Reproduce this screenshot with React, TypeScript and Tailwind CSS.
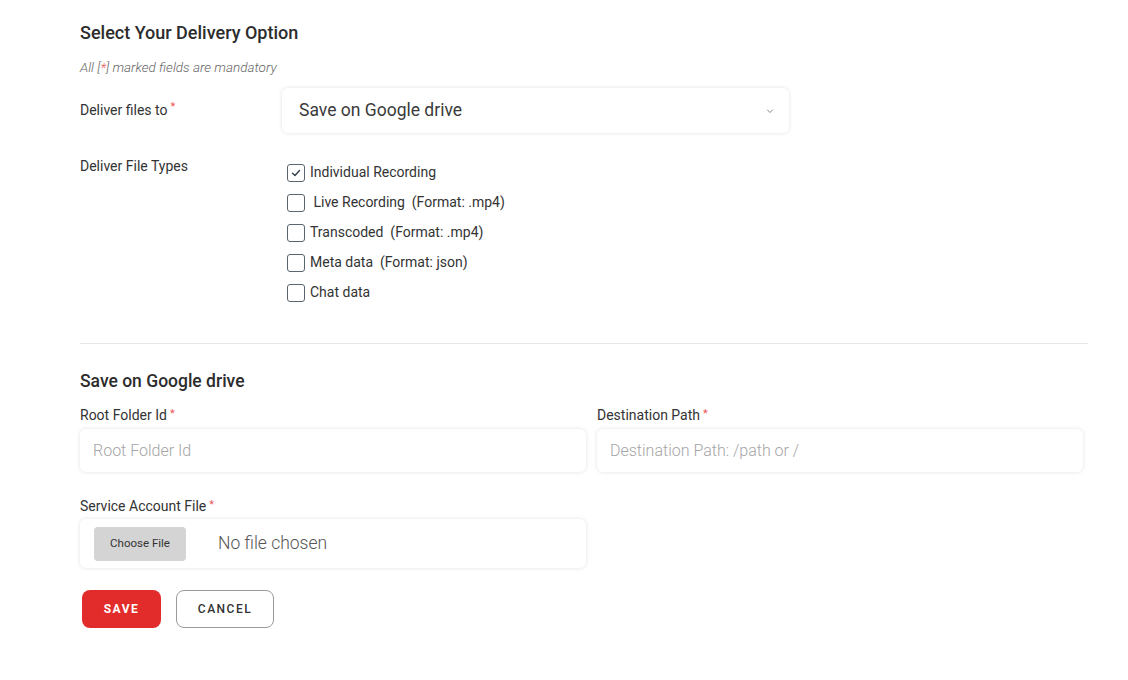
const fileTypes = [
  { label: "Individual Recording", checked: true },
  { label: " Live Recording  (Format: .mp4)", checked: false },
  { label: "Transcoded  (Format: .mp4)", checked: false },
  { label: "Meta data  (Format: json)", checked: false },
  { label: "Chat data", checked: false },
];

function Req() {
  return <span className="text-[#e55] text-[11px] align-top ml-[3px] relative top-[-1px]">*</span>;
}

function CheckBox({ checked }: { checked: boolean }) {
  return (
    <span className="w-[18px] h-[18px] border-[1.5px] border-[#5b6570] rounded-[3px] flex items-center justify-center shrink-0">
      {checked && (
        <svg width="12" height="12" viewBox="0 0 12 12" fill="none">
          <path d="M2.5 6.2 L5 8.5 L9.5 3.5" stroke="#3c4650" strokeWidth="1.5" strokeLinecap="round" strokeLinejoin="round" />
        </svg>
      )}
    </span>
  );
}

export default function App() {
  return (
    <div className="w-[1128px] h-[680px] bg-white pl-[80px] pr-[40px] pt-[22px] text-[#333] font-['Roboto',sans-serif]">
      <h2 className="text-[18px] font-medium text-[#2c2c2c] leading-[22px]">Select Your Delivery Option</h2>
      <p className="mt-[15px] text-[13.5px] italic font-light text-[#666] leading-[16px]">
        All [<span className="text-[#e55]">*</span>] marked fields are mandatory
      </p>

      <div className="flex items-center mt-[13px]">
        <label className="w-[202px] text-[14px] text-[#333]">
          Deliver files to<Req />
        </label>
        <div className="w-[507px] h-[45px] rounded-[6px] bg-white shadow-[0_0_4px_rgba(0,0,0,0.12)] flex items-center justify-between pl-[17px] pr-[14px]">
          <span className="text-[17.5px] text-[#3a3a3a]">Save on Google drive</span>
          <svg width="10" height="10" viewBox="0 0 10 10" fill="none">
            <path d="M2.5 4 L5 6.5 L7.5 4" stroke="#888" strokeWidth="1" strokeLinecap="round" strokeLinejoin="round" />
          </svg>
        </div>
      </div>

      <div className="flex mt-[25px]">
        <label className="w-[207px] text-[14px] text-[#333] leading-[16px]">Deliver File Types</label>
        <div className="flex flex-col gap-[11px] mt-[5px]">
          {fileTypes.map((f) => (
            <div key={f.label} className="flex items-center gap-[5px] h-[19px]">
              <CheckBox checked={f.checked} />
              <span className="text-[14px] text-[#333] whitespace-pre">{f.label}</span>
            </div>
          ))}
        </div>
      </div>

      <div className="border-t border-[#e6e6e6] mt-[41px]" />

      <h3 className="mt-[26px] text-[17.5px] font-medium text-[#2c2c2c] leading-[22px]">Save on Google drive</h3>

      <div className="grid grid-cols-[506px_486px] gap-x-[11px] mt-[15px]">
        <div>
          <label className="block text-[14px] text-[#333] leading-[16px]">
            Root Folder Id<Req />
          </label>
          <div className="mt-[6px] h-[43px] rounded-[6px] shadow-[0_0_4px_rgba(0,0,0,0.12)] flex items-center px-[13px]">
            <span className="text-[16px] text-[#a5a5a5] font-light">Root Folder Id</span>
          </div>
        </div>
        <div>
          <label className="block text-[14px] text-[#333] leading-[16px]">
            Destination Path<Req />
          </label>
          <div className="mt-[6px] h-[43px] rounded-[6px] shadow-[0_0_4px_rgba(0,0,0,0.12)] flex items-center px-[13px]">
            <span className="text-[16px] text-[#a5a5a5] font-light">Destination Path: /path or /</span>
          </div>
        </div>
      </div>

      <label className="block mt-[26px] text-[14px] text-[#333] leading-[16px]">
        Service Account File<Req />
      </label>
      <div className="mt-[5px] w-[506px] h-[49px] rounded-[6px] shadow-[0_0_4px_rgba(0,0,0,0.12)] flex items-center px-[14px]">
        <span className="w-[92px] h-[34px] rounded-[4px] bg-[#d4d4d4] flex items-center justify-center text-[11.5px] text-[#333]">
          Choose File
        </span>
        <span className="ml-[32px] text-[17.5px] text-[#555] font-light">No file chosen</span>
      </div>

      <div className="flex gap-[15px] mt-[22px] ml-[2px]">
        <button className="w-[79px] h-[38px] rounded-[8px] bg-[#e22b2b] text-white text-[12px] font-bold tracking-[1.5px]">
          SAVE
        </button>
        <button className="w-[98px] h-[38px] rounded-[8px] border border-[#9a9a9a] bg-white text-[#333] text-[12px] font-medium tracking-[1.5px]">
          CANCEL
        </button>
      </div>
    </div>
  );
}
